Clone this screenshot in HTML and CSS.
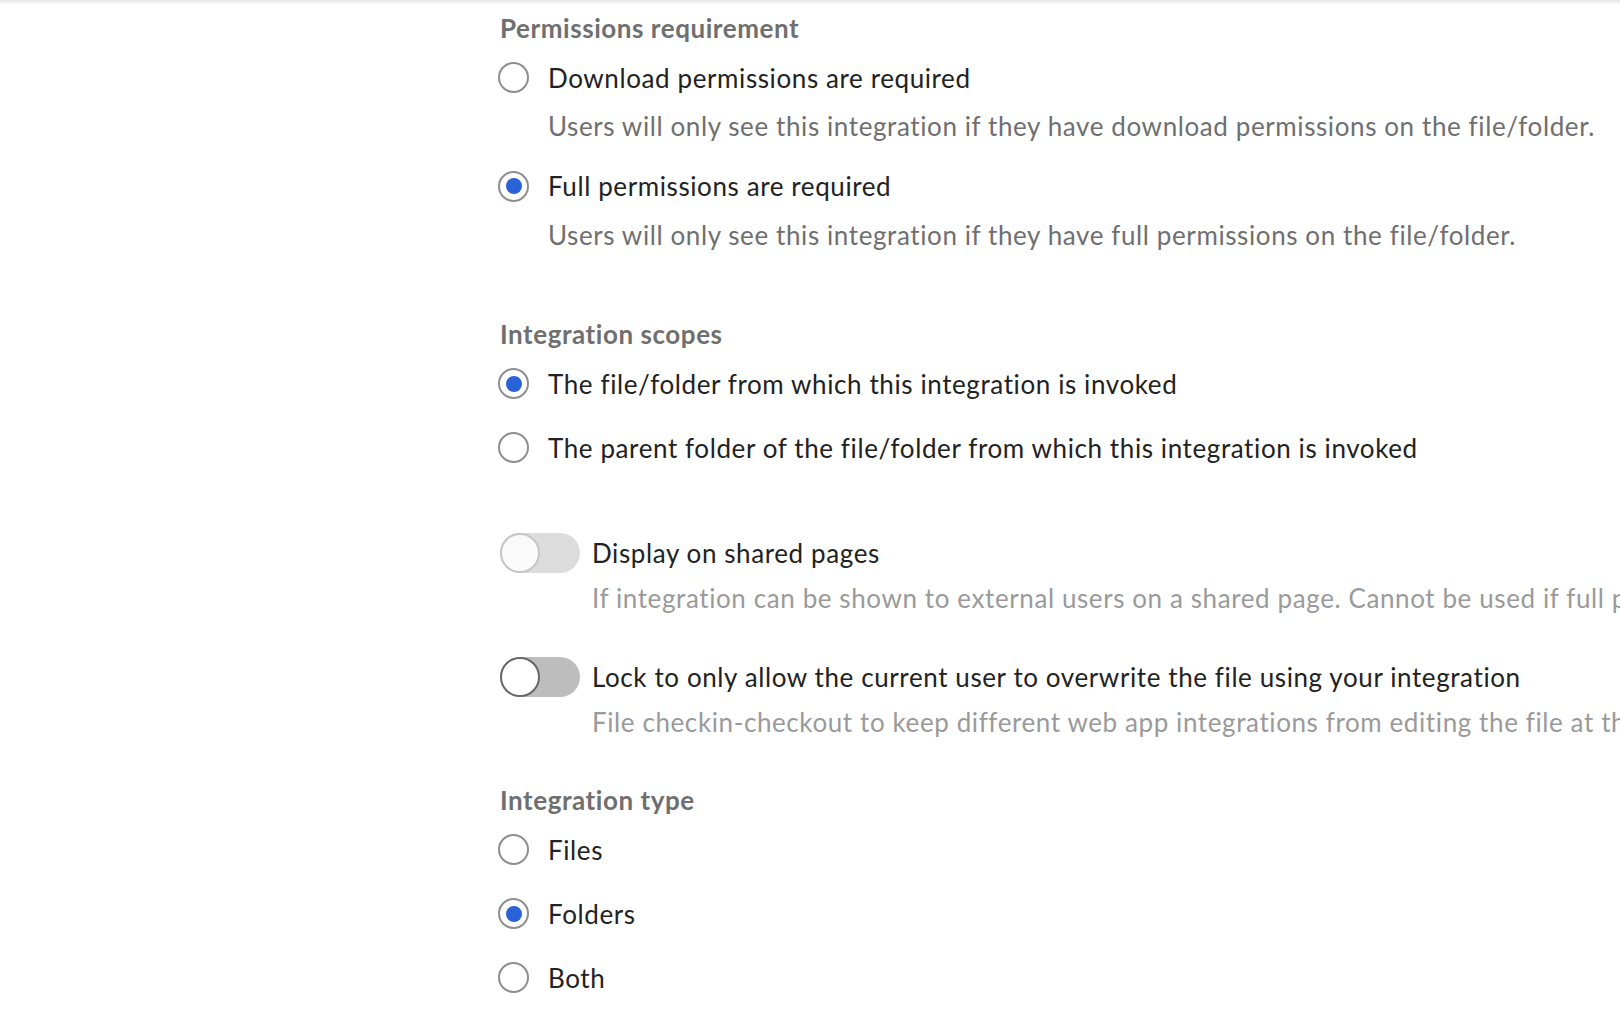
FILE: index.html
```html
<!DOCTYPE html>
<html lang="en">
<head>
<meta charset="utf-8">
<title>Integration settings</title>
<link rel="stylesheet" href="styles.css">
</head>
<body>
<div class="topshadow"></div>
<main class="form">
  <section class="group group-perm">
    <h3 class="group-title">Permissions requirement</h3>
    <div class="options">
      <div class="option">
        <label class="row"><span class="radio"></span><span class="label">Download permissions are required</span></label>
        <p class="desc">Users will only see this integration if they have download permissions on the file/folder.</p>
      </div>
      <div class="option">
        <label class="row"><span class="radio checked"></span><span class="label">Full permissions are required</span></label>
        <p class="desc">Users will only see this integration if they have full permissions on the file/folder.</p>
      </div>
    </div>
  </section>

  <section class="group group-scope">
    <h3 class="group-title">Integration scopes</h3>
    <div class="options">
      <div class="option">
        <label class="row"><span class="radio checked"></span><span class="label">The file/folder from which this integration is invoked</span></label>
      </div>
      <div class="option">
        <label class="row"><span class="radio"></span><span class="label">The parent folder of the file/folder from which this integration is invoked</span></label>
      </div>
    </div>
  </section>

  <section class="toggles">
    <div class="toggle-item">
      <label class="row"><span class="toggle toggle-disabled"><span class="knob"></span></span><span class="label">Display on shared pages</span></label>
      <p class="desc desc-light">If integration can be shown to external users on a shared page. Cannot be used if full permissions are required.</p>
    </div>
    <div class="toggle-item">
      <label class="row"><span class="toggle"><span class="knob"></span></span><span class="label">Lock to only allow the current user to overwrite the file using your integration</span></label>
      <p class="desc desc-light">File checkin-checkout to keep different web app integrations from editing the file at the same time.</p>
    </div>
  </section>

  <section class="group group-type">
    <h3 class="group-title">Integration type</h3>
    <div class="options">
      <div class="option"><label class="row"><span class="radio"></span><span class="label">Files</span></label></div>
      <div class="option"><label class="row"><span class="radio checked"></span><span class="label">Folders</span></label></div>
      <div class="option"><label class="row"><span class="radio"></span><span class="label">Both</span></label></div>
    </div>
  </section>
</main>
</body>
</html>
```
FILE: styles.css
```css
html, body {
  margin: 0;
  padding: 0;
  background: #fff;
  overflow: hidden;
}
body {
  font-family: Lato, "Open Sans", sans-serif;
  color: #222;
  width: 1620px;
  height: 1034px;
  position: relative;
}
.topshadow {
  position: absolute;
  top: 0;
  left: 0;
  right: 0;
  height: 5px;
  background: linear-gradient(to bottom, #e6e6e6, rgba(255,255,255,0));
}
.form {
  padding: 12px 0 0 498px;
  white-space: nowrap;
}
.group-title {
  margin: 0 0 13.5px 2px;
  font-size: 26px;
  line-height: 32px;
  font-weight: 700;
  color: #6f6f6f;
  letter-spacing: 0.55px;
}
.options {
  display: flex;
  flex-direction: column;
  gap: 24px;
}
.row {
  display: flex;
  align-items: center;
  height: 40px;
}
.radio {
  box-sizing: border-box;
  width: 31px;
  height: 31px;
  border: 2px solid #8e8e8e;
  border-radius: 50%;
  display: flex;
  align-items: center;
  justify-content: center;
  flex: none;
  margin-right: 19px;
}
.radio.checked::after {
  content: "";
  width: 16px;
  height: 16px;
  border-radius: 50%;
  background: #2a62d8;
}
.label {
  font-size: 26px;
  line-height: 40px;
  color: #222;
  letter-spacing: 0.6px;
}
.desc {
  margin: 12.5px 0 0 50px;
  font-size: 26px;
  line-height: 32px;
  color: #6f6f6f;
  letter-spacing: 0.6px;
}
.group-scope {
  margin-top: 67.5px;
}
.toggles {
  margin-top: 65.5px;
  margin-left: 2px;
  display: flex;
  flex-direction: column;
  gap: 43.5px;
}
.toggle {
  box-sizing: border-box;
  width: 80px;
  height: 40px;
  border-radius: 20px;
  background: #bdbdbd;
  flex: none;
  margin-right: 12px;
  display: flex;
  align-items: center;
}
.knob {
  box-sizing: border-box;
  width: 40px;
  height: 40px;
  border-radius: 50%;
  background: #fff;
  border: 2px solid #686868;
}
.toggle-disabled {
  background: #dcdcdc;
}
.toggle-disabled .knob {
  background: #fafafa;
  border-color: #c6c6c6;
}
.toggle-item .desc {
  margin: 8.5px 0 0 92px;
}
.desc-light {
  color: #9a9a9a;
}
.group-type {
  margin-top: 46.5px;
}
```
